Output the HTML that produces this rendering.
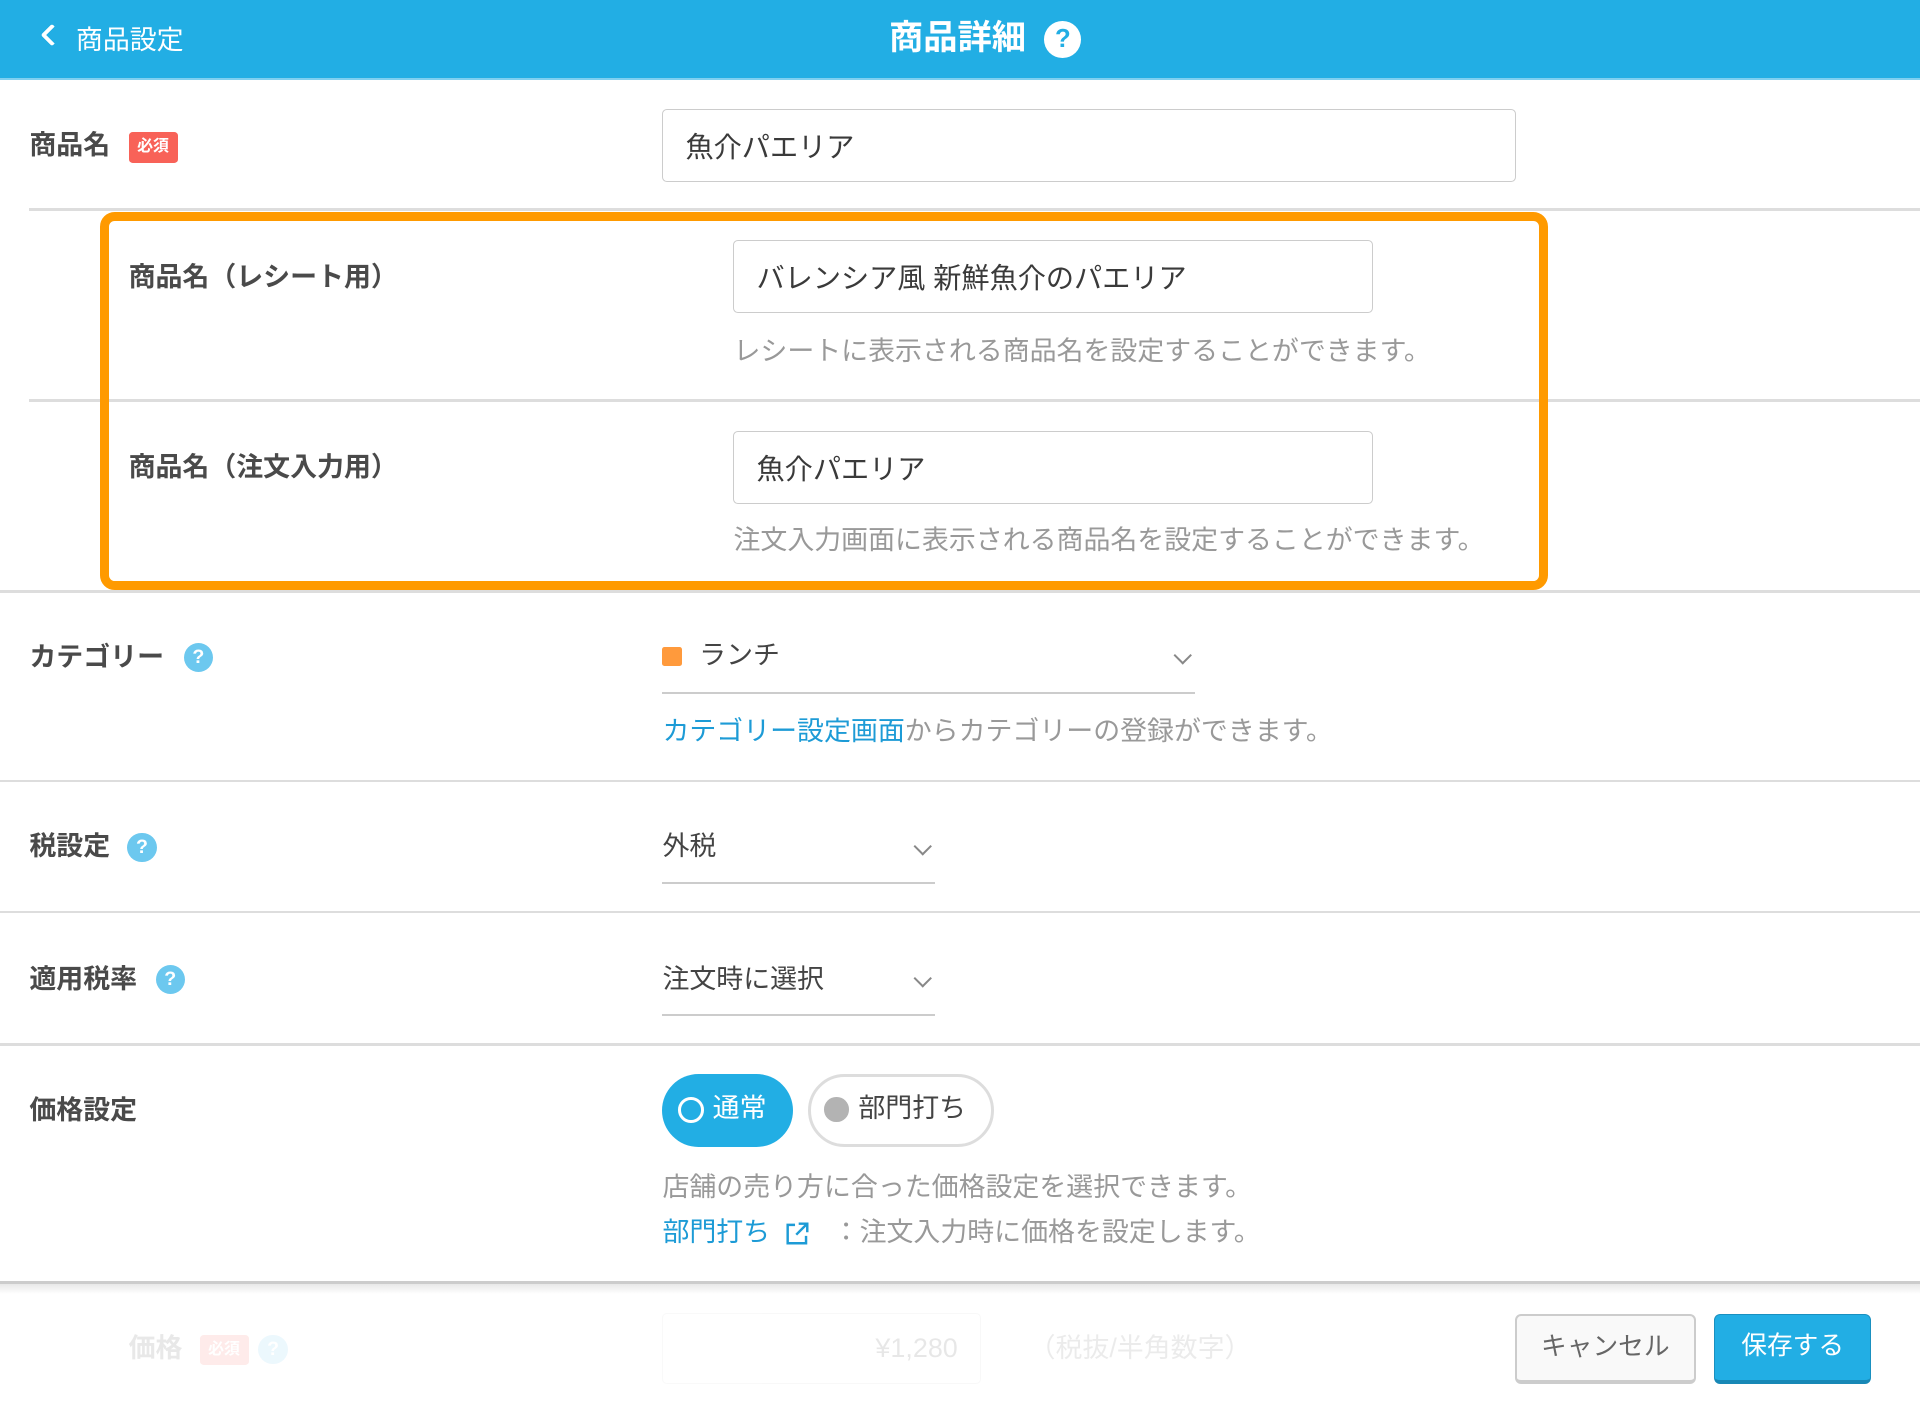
<!DOCTYPE html>
<html><head><meta charset="utf-8">
<style>
*{margin:0;padding:0;box-sizing:border-box}
html,body{width:1920px;height:1404px;overflow:hidden;background:#fff}
#w{position:relative;width:1568px;height:1147px;zoom:1.22449;font-family:"Liberation Sans","Noto Sans CJK JP",sans-serif;color:#444;overflow:hidden}
.a{position:absolute;white-space:nowrap}
.hdr{left:0;top:0;width:1568px;height:65px;background:#22aee4;border-bottom:2px solid #7fd0f0}
.lbl{font-size:22px;font-weight:bold;color:#4a4a4a;line-height:26px}
.inp{border:1.5px solid #ccc;border-radius:4px;background:#fff;font-size:23px;color:#3a3a3a;padding-left:18px;display:flex;align-items:center}
.hint{font-size:22px;color:#999;line-height:26px}
.line{height:2px;background:#ddd}
.help{width:24px;height:24px;border-radius:50%;background:#6cc8ef;color:#fff;font-size:16px;font-weight:bold;text-align:center;line-height:24px}
.sel{font-size:22px;color:#444;line-height:26px}
.ul{height:2px;background:#ccc}
.chev{width:11px;height:11px;border-right:2px solid #888;border-bottom:2px solid #888;transform:rotate(45deg)}
.badge{background:#f86258;color:#fff;font-size:13px;font-weight:bold;border-radius:3px;text-align:center;line-height:25px}
</style></head><body><div id="w">
<div class="a hdr"></div>
<div class="a" style="left:36px;top:22px;width:13px;height:13px;border-left:4px solid #fff;border-bottom:4px solid #fff;transform:rotate(45deg);border-radius:2px"></div>
<div class="a" style="left:62px;top:19px;font-size:22px;color:#fff;line-height:28px">商品設定</div>
<div class="a" style="left:726px;top:15px;font-size:28px;font-weight:bold;color:#fff;line-height:34px">商品詳細</div>
<div class="a" style="left:853px;top:17px;width:30px;height:30px;border-radius:50%;background:#fff;color:#22aee4;font-weight:bold;font-size:21px;text-align:center;line-height:30px">?</div>

<div class="a lbl" style="left:24px;top:106px">商品名</div>
<div class="a badge" style="left:105px;top:108px;width:40px;height:25px">必須</div>
<div class="a inp" style="left:541px;top:89px;width:697px;height:60px">魚介パエリア</div>
<div class="a line" style="left:24px;top:170px;width:1544px"></div>

<div class="a lbl" style="left:105px;top:214px">商品名（レシート用）</div>
<div class="a inp" style="left:599px;top:196px;width:522px;height:60px">バレンシア風 新鮮魚介のパエリア</div>
<div class="a hint" style="left:599px;top:274px">レシートに表示される商品名を設定することができます。</div>
<div class="a line" style="left:24px;top:326px;width:1544px"></div>

<div class="a lbl" style="left:105px;top:369px">商品名（注文入力用）</div>
<div class="a inp" style="left:599px;top:352px;width:522px;height:60px">魚介パエリア</div>
<div class="a hint" style="left:599px;top:429px">注文入力画面に表示される商品名を設定することができます。</div>

<div class="a" style="left:82px;top:173px;width:1182px;height:309px;border:8px solid #ff9a00;border-radius:12px"></div>
<div class="a line" style="left:0;top:482px;width:1568px"></div>

<div class="a lbl" style="left:24px;top:524px">カテゴリー</div>
<div class="a help" style="left:150px;top:525px">?</div>
<div class="a" style="left:541px;top:528px;width:16px;height:16px;background:#ff9a3c;border-radius:2px"></div>
<div class="a sel" style="left:571px;top:523px">ランチ</div>
<div class="a chev" style="left:960px;top:530px"></div>
<div class="a ul" style="left:541px;top:565px;width:435px"></div>
<div class="a hint" style="left:541px;top:585px"><span style="color:#1d9bd6">カテゴリー設定画面</span>からカテゴリーの登録ができます。</div>
<div class="a line" style="left:0;top:637px;width:1568px"></div>

<div class="a lbl" style="left:24px;top:679px">税設定</div>
<div class="a help" style="left:104px;top:680px">?</div>
<div class="a sel" style="left:541px;top:679px">外税</div>
<div class="a chev" style="left:748px;top:686px"></div>
<div class="a ul" style="left:541px;top:720px;width:223px"></div>
<div class="a line" style="left:0;top:744px;width:1568px"></div>

<div class="a lbl" style="left:24px;top:787px">適用税率</div>
<div class="a help" style="left:127px;top:788px">?</div>
<div class="a sel" style="left:541px;top:787px">注文時に選択</div>
<div class="a chev" style="left:748px;top:794px"></div>
<div class="a ul" style="left:541px;top:828px;width:223px"></div>
<div class="a line" style="left:0;top:852px;width:1568px"></div>

<div class="a lbl" style="left:24px;top:894px">価格設定</div>
<div class="a" style="left:541px;top:877px;width:107px;height:60px;border-radius:30px;background:#22aee4"></div>
<div class="a" style="left:554px;top:896px;width:21px;height:21px;border-radius:50%;border:3px solid #fff"></div>
<div class="a" style="left:582px;top:893px;font-size:22px;color:#fff;line-height:26px">通常</div>
<div class="a" style="left:660px;top:877px;width:152px;height:60px;border-radius:30px;border:3px solid #ddd;background:#fff"></div>
<div class="a" style="left:673px;top:896px;width:20px;height:20px;border-radius:50%;background:#b3b3b3"></div>
<div class="a" style="left:701px;top:893px;font-size:22px;color:#444;line-height:26px">部門打ち</div>
<div class="a hint" style="left:541px;top:957px">店舗の売り方に合った価格設定を選択できます。</div>
<div class="a hint" style="left:541px;top:994px"><span style="color:#1d9bd6">部門打ち</span></div>
<svg class="a" style="left:640px;top:996px" width="22" height="22" viewBox="0 0 22 22" fill="none" stroke="#1d9bd6" stroke-width="2"><path d="M9 4H3v15h15v-6"/><path d="M12 3h7v7M19 3l-9 9"/></svg>
<div class="a hint" style="left:680px;top:994px">：注文入力時に価格を設定します。</div>

<div class="a" style="left:0;top:1046px;width:1568px;height:3px;background:#ccc"></div>
<div class="a" style="left:0;top:1049px;width:1568px;height:8px;background:linear-gradient(#e8e8e8,#fff)"></div>
<div style="opacity:0.12">
<div class="a lbl" style="left:105px;top:1089px">価格</div>
<div class="a badge" style="left:163px;top:1090px;width:40px;height:25px">必須</div>
<div class="a help" style="left:211px;top:1090px">?</div>
<div class="a" style="left:541px;top:1072px;width:260px;height:58px;border:1.5px solid #ccc;border-radius:4px;font-size:22px;text-align:right;padding-right:18px;line-height:56px">¥1,280</div>
<div class="a hint" style="left:840px;top:1089px;color:#666">（税抜/半角数字）</div>
</div>
<div class="a" style="left:1237px;top:1073px;width:148px;height:57px;background:#f9f9f9;border:2px solid #ccc;border-bottom:4px solid #ccc;border-radius:5px;font-size:21px;color:#666;text-align:center;line-height:51px">キャンセル</div>
<div class="a" style="left:1400px;top:1073px;width:128px;height:57px;background:#22aee4;border:1px solid #1a90c0;border-bottom:4px solid #1888b6;border-radius:5px;font-size:21px;color:#fff;text-align:center;line-height:52px">保存する</div>
</div></body></html>
